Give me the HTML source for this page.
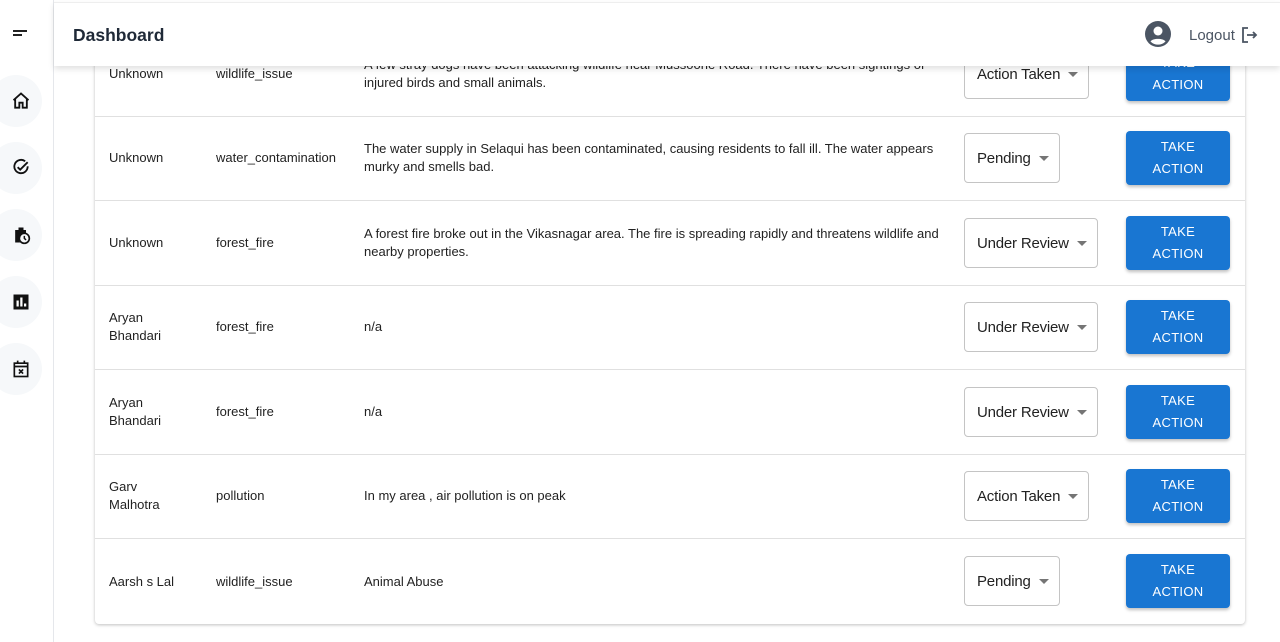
<!DOCTYPE html>
<html><head><style>
*{box-sizing:border-box;margin:0;padding:0}
body{width:1280px;height:642px;overflow:hidden;background:#fff;font-family:"Liberation Sans",Arial,sans-serif;position:relative}
.side{position:absolute;left:0;top:0;width:54px;height:642px;border-right:1px solid #e5e7eb;background:#fff}
.ib{position:absolute;left:-10px;width:52px;height:52px;border-radius:26px;background:#f6f8fa;display:flex;align-items:center;justify-content:center;padding-left:10px}
.hdr{position:absolute;left:54px;top:2px;right:0;height:64px;background:#fff;box-shadow:0 3px 6px rgba(0,0,0,.12);z-index:5;border-top:1px solid #eee}
.hdr h1{position:absolute;left:19px;top:22px;font-size:17.5px;font-weight:bold;color:#1f2937}
.card{position:absolute;left:95px;top:20px;width:1150px;height:604px;background:#fff;box-shadow:0 1px 3px rgba(0,0,0,.25);border-radius:4px}
.row{position:absolute;left:95px;width:1150px;height:85px;border-bottom:1px solid #e0e0e0;font-size:13px;color:#222}
.c{position:absolute;top:50%;transform:translateY(-50%);line-height:18px}
.sel{position:absolute;left:869px;top:17px;height:50px;border:1px solid #c4c4c4;border-radius:4px;font-size:15px;color:#222;padding:0 0 0 12px;display:flex;align-items:center;letter-spacing:-.2px}
.sel::after{content:"";border-left:5px solid transparent;border-right:5px solid transparent;border-top:5px solid #757575;margin-left:8px;margin-right:10px}
.btn{position:absolute;left:1031px;top:15px;width:104px;height:54px;background:#1976d2;border-radius:4px;color:#fff;font-size:13px;text-align:center;line-height:22px;padding-top:5px;letter-spacing:.3px;box-shadow:0 2px 3px rgba(0,0,0,.25)}
</style></head><body>
<div class="side">
<svg style="position:absolute;left:13px;top:30px" width="16" height="6"><rect x="0" y="0" width="14" height="2" fill="#222"/><rect x="0" y="4" width="9" height="2" fill="#222"/></svg>
<div class="ib" style="top:75px"><svg width="20" height="20" viewBox="0 0 24 24" fill="none" stroke="#111" stroke-width="2.2"><path d="M3 11L12 3l9 8M5 9v11h5v-6h4v6h5V9"/></svg></div>
<div class="ib" style="top:142px"><svg width="20" height="20" viewBox="0 0 24 24" fill="none" stroke="#111" stroke-width="2.2"><path d="M20 10a8 8 0 1 1-3-6"/><path d="M8 11l3 3 9-9"/></svg></div>
<div class="ib" style="top:209px"><svg width="20" height="20" viewBox="0 0 24 24"><path d="M9 3h6v3h3v4a7 7 0 0 0-7 11H5V6h4z" fill="#111"/><circle cx="16" cy="16" r="6" fill="none" stroke="#111" stroke-width="2"/><path d="M16 13v3l2 2" stroke="#111" stroke-width="1.8" fill="none"/></svg></div>
<div class="ib" style="top:276px"><svg width="18" height="18" viewBox="0 0 24 24"><rect x="2" y="2" width="20" height="20" fill="#111"/><rect x="6" y="10" width="3" height="8" fill="#fff"/><rect x="11" y="6" width="3" height="12" fill="#fff"/><rect x="16" y="14" width="3" height="4" fill="#fff"/></svg></div>
<div class="ib" style="top:343px"><svg width="20" height="20" viewBox="0 0 24 24" fill="none" stroke="#111" stroke-width="2"><rect x="4" y="5" width="16" height="16"/><path d="M4 9h16M8 2v4M16 2v4M9.5 12.5l5 5M14.5 12.5l-5 5"/></svg></div>
</div>
<div class="card"></div>
<div class="row" style="top:32px"><div class="c" style="left:14px">Unknown</div><div class="c" style="left:121px">wildlife_issue</div><div class="c" style="left:269px;width:570px">A few stray dogs have been attacking wildlife near Mussoorie Road. There have been sightings of injured birds and small animals.</div><div class="sel">Action Taken</div><div class="btn">TAKE<br>ACTION</div></div>
<div class="row" style="top:116px"><div class="c" style="left:14px">Unknown</div><div class="c" style="left:121px">water_contamination</div><div class="c" style="left:269px;width:575px">The water supply in Selaqui has been contaminated, causing residents to fall ill. The water appears murky and smells bad.</div><div class="sel">Pending</div><div class="btn">TAKE<br>ACTION</div></div>
<div class="row" style="top:201px"><div class="c" style="left:14px">Unknown</div><div class="c" style="left:121px">forest_fire</div><div class="c" style="left:269px;width:575px">A forest fire broke out in the Vikasnagar area. The fire is spreading rapidly and threatens wildlife and nearby properties.</div><div class="sel">Under Review</div><div class="btn">TAKE<br>ACTION</div></div>
<div class="row" style="top:285px"><div class="c" style="left:14px">Aryan<br>Bhandari</div><div class="c" style="left:121px">forest_fire</div><div class="c" style="left:269px">n/a</div><div class="sel">Under Review</div><div class="btn">TAKE<br>ACTION</div></div>
<div class="row" style="top:370px"><div class="c" style="left:14px">Aryan<br>Bhandari</div><div class="c" style="left:121px">forest_fire</div><div class="c" style="left:269px">n/a</div><div class="sel">Under Review</div><div class="btn">TAKE<br>ACTION</div></div>
<div class="row" style="top:454px"><div class="c" style="left:14px">Garv<br>Malhotra</div><div class="c" style="left:121px">pollution</div><div class="c" style="left:269px">In my area , air pollution is on peak</div><div class="sel">Action Taken</div><div class="btn">TAKE<br>ACTION</div></div>
<div class="row" style="top:539px;border-bottom:none"><div class="c" style="left:14px">Aarsh s Lal</div><div class="c" style="left:121px">wildlife_issue</div><div class="c" style="left:269px">Animal Abuse</div><div class="sel">Pending</div><div class="btn">TAKE<br>ACTION</div></div>
<div class="hdr"><h1>Dashboard</h1>
<svg style="position:absolute;left:1091px;top:18px" width="26" height="26" viewBox="0 0 26 26"><circle cx="13" cy="13" r="13" fill="#4b5563"/><circle cx="13" cy="10" r="4.5" fill="#fff"/><path d="M5.5 20.5c2-3.5 13-3.5 15 0a10.5 10.5 0 0 1-15 0z" fill="#fff"/></svg>
<div style="position:absolute;left:1135px;top:24px;font-size:15px;color:#4b5563">Logout</div>
<svg style="position:absolute;left:1188px;top:24px" width="16" height="16" viewBox="0 0 16 16" fill="none" stroke="#4b5563" stroke-width="1.8"><path d="M6 1H1v14h5M5 8h9M11 5l3 3-3 3"/></svg>
</div>
</body></html>
